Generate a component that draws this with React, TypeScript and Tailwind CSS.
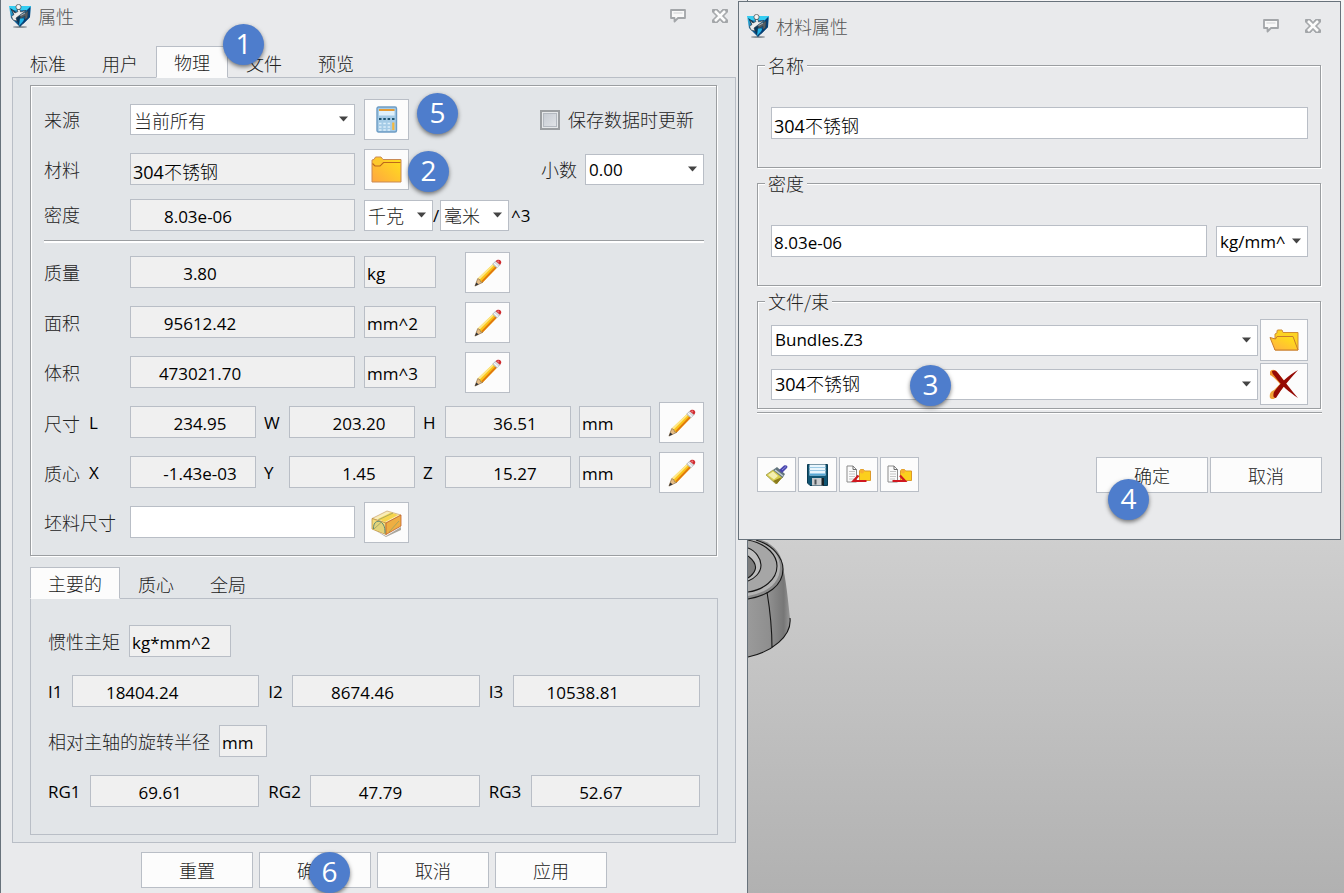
import { useId, useState } from "react";
import type { ReactNode } from "react";

const latin = "font-['Open_Sans','Noto_Sans_CJK_SC',sans-serif] text-[17px] leading-6 font-normal text-black";
const mixed = "font-['Open_Sans','Noto_Sans_CJK_SC_Light','Noto_Sans_CJK_SC',sans-serif] text-[18px] leading-6 font-normal text-black";
const cjk = "font-['Noto_Sans_CJK_SC',sans-serif] text-[18px] leading-6 font-light text-[#222]";
const etched = "border border-[#9b9ea1] shadow-[1px_1px_0_#fff,inset_1px_1px_0_#fff]";
const edge = "border border-[#b9bec6]";

function Logo() {
  return (
    <svg width="24" height="24" viewBox="0 0 24 24" aria-hidden="true">
      <defs>
        <linearGradient id="shield" x1="0" y1="0" x2="0.6" y2="1">
          <stop offset="0" stopColor="#48d8f6" />
          <stop offset="0.45" stopColor="#1673ad" />
          <stop offset="1" stopColor="#0a3f72" />
        </linearGradient>
      </defs>
      <ellipse cx="12" cy="23" rx="7" ry="1" fill="#8b9297" />
      <path d="M1 2 L23 2 L22 13 L12 23 L3 14 Z" fill="url(#shield)" />
      <path d="M1 2 L23 2 L21 6 L4 6 Z" fill="#35cdf2" />
      <path d="M2 4 L12 23 L13 14 L7 7 Z" fill="#0b3658" />
      <path d="M11 22 L12 14 L17 15 Z" fill="#21b5e8" />
      <path d="M22 3 L22 13 L15 20 L16 15 L20 11 L19 6 Z" fill="#063f75" />
      <circle cx="10.500" cy="3" r="2.600" fill="#f4f4f4" stroke="#3d4348" strokeWidth="0.7" />
      <path
        d="M4 6 L7 9 L10 7.500 L9 5.500 L12 5.500 L12.500 8 L18 6.500 L12 11 L8 14 L9 17 L5 16 L3.500 12.500 L6 10.500 Z"
        fill="#ededed"
        stroke="#31383e"
        strokeWidth="0.6"
      />
      <path d="M12 11.500 L20 7 L19.500 14 L17 15.500 L17 12 L12.500 14.500 Z" fill="#555d63" stroke="#2b3237" strokeWidth="0.4" />
      <path d="M12.500 11.500 L17 9" stroke="#c9cdd0" strokeWidth="0.8" />
    </svg>
  );
}

function SpeechIcon() {
  return (
    <svg width="18" height="16" viewBox="0 0 18 16" aria-hidden="true">
      <path d="M2 2 H16 V10 H9 L5.500 13.500 V10 H2 Z" fill="#f9f9f9" stroke="#a3a6a9" strokeWidth="1.800" strokeLinejoin="round" />
      <path d="M4.500 5 H13.500" stroke="#cfd1d3" />
    </svg>
  );
}

function CrossIcon() {
  return (
    <svg width="18" height="16" viewBox="0 0 18 16" aria-hidden="true">
      <path
        d="M1.500 1.500 H6.500 L9 4.500 L11.500 1.500 H16.500 V4 L12.500 8 L16.500 12 V14.500 H11.500 L9 11.500 L6.500 14.500 H1.500 V12 L5.500 8 L1.500 4 Z"
        fill="#a3a6a9"
        stroke="#a3a6a9"
        strokeLinejoin="round"
      />
      <path d="M4 3 L14 13 M14 3 L4 13" stroke="#fbfbfb" strokeWidth="2.600" />
    </svg>
  );
}

function PencilIcon() {
  return (
    <svg width="28" height="28" viewBox="0 0 30 30" aria-hidden="true">
      <path d="M4 21 L20 5.500 L24.500 9.500 L9.500 25 L7 24.500 L6.500 22.500 Z" fill="#fcc419" />
      <path d="M4 21 L20 5.500 L21.300 6.700 L6 22 Z" fill="#fde98d" />
      <path d="M9.500 25 L24.500 9.500 L22.800 8 L8 23.500 Z" fill="#e0790e" />
      <path d="M4 21 L6.300 22.200 L7 24.500 L9.500 25 L1 29 Z" fill="#e6bd86" stroke="#8c6a3c" strokeWidth="0.7" />
      <path d="M1 29 L2.500 25.200 L5 27.300 Z" fill="#30323a" />
      <path d="M20 5.500 L23.500 2 L28 6 L24.500 9.500 Z" fill="#d9dcdf" stroke="#9fa3a7" strokeWidth="0.7" />
      <path d="M21.500 4.500 L26 8.500" stroke="#fff" />
      <path d="M23.300 2.400 C24.500 0.600 27.500 0.500 28.600 1.800 C29.700 3.200 29.300 4.800 27.900 6.200 Z" fill="#cf2a2f" />
      <circle cx="26" cy="2.700" r="1.100" fill="#ee7375" />
    </svg>
  );
}

function CalculatorIcon() {
  return (
    <svg width="22" height="28" viewBox="0 0 22 28" aria-hidden="true">
      <rect x="1" y="1" width="19.500" height="25" rx="1.500" fill="#a5cbe6" stroke="#6d9cc4" strokeWidth="1.400" />
      <rect x="3" y="3" width="15.500" height="2" fill="#e59b33" />
      <rect x="3" y="5" width="15.500" height="4.500" fill="#dff1fb" />
      <path d="M3 13 h2.500 M7.300 13 h2.500 M11.600 13 h2.500 M16 13 h2.500" stroke="#1d5470" strokeWidth="2" />
      <path d="M3 17.500 h2.500 M7.300 17.500 h2.500 M11.600 17.500 h2.500 M3 21 h2.500 M7.300 21 h2.500 M11.600 21 h2.500 M3 24 h2.500 M7.300 24 h2.500 M11.600 24 h2.500" stroke="#dbeefa" strokeWidth="1.600" />
      <rect x="16.200" y="16.500" width="2.200" height="7.500" fill="#f5b73c" />
    </svg>
  );
}

function FolderIcon() {
  return (
    <svg width="32" height="28" viewBox="0 0 32 28" aria-hidden="true">
      <defs>
        <linearGradient id="folderFill" x1="0" y1="1" x2="1" y2="0">
          <stop offset="0" stopColor="#ffa640" />
          <stop offset="1" stopColor="#ffe31a" />
        </linearGradient>
      </defs>
      <path d="M1 4 L3 3.500 L4.500 1 H10 L12 3.500 H30 V26 H1 Z" fill="url(#folderFill)" stroke="#c98a55" />
      <path d="M1.500 7.500 L4 10 H9 L12.500 6.500 H29.500" fill="none" stroke="#bd6a1c" strokeWidth="1.200" />
      <path d="M5 2 H9.500 L11.500 4.500 V6 L9 9 H4.500 L2 6.500 V4.500 H4 Z" fill="#fdc92c" />
    </svg>
  );
}

function OpenFolderIcon() {
  return (
    <svg width="30" height="22" viewBox="0 0 30 22" aria-hidden="true">
      <defs>
        <linearGradient id="openFill" x1="0" y1="1" x2="1" y2="0">
          <stop offset="0" stopColor="#ffae45" />
          <stop offset="1" stopColor="#ffe70f" />
        </linearGradient>
      </defs>
      <path d="M6 20 V5 L8 4 V1.500 L9 1 H13 L14 3.500 H29 V21 H6 Z" fill="#fdd321" stroke="#cf8d35" />
      <path d="M1 8.500 L6.500 10 L8 7.500 H24 L29 21 H6 Z" fill="url(#openFill)" stroke="#c97d2a" />
    </svg>
  );
}

function DeleteIcon() {
  return (
    <svg width="30" height="30" viewBox="0 0 30 30" aria-hidden="true">
      <path d="M1 3 C2 0 6 0 8 3 L17 14 L13 17 C8 12 4 7 1 6 Z" fill="#f0932b" />
      <path d="M1 29 C0 25 2 22 5 21 L12 14 L15 17 L6 29 C4 31 2 30 1 29 Z" fill="#f0a437" />
      <path d="M3 2 C5 1 7 1 9 4 C16 13 23 22 29 29 C20 23 12 16 7 9 C5 6 3 5 3 2 Z" fill="#960b05" />
      <path d="M29 1 C20 11 13 19 7 29 C4 29 4 26 5 23 C11 14 20 6 29 1 Z" fill="#960b05" />
    </svg>
  );
}

function StockIcon() {
  return (
    <svg width="32" height="28" viewBox="0 0 32 28" aria-hidden="true">
      <path d="M2 20 L15 27 L30 18 V21 L15 28 Z" fill="#aaa79f" />
      <path d="M1 9.500 L16 2 L30 6 L15 14 Z" fill="#f9edb8" stroke="#c9a06b" strokeWidth="0.7" />
      <path d="M1 9.500 L15 14 V25.500 L1 20 Z" fill="#f4dc7c" stroke="#b9862f" strokeWidth="0.7" />
      <path d="M15 14 L30 6 V17 L15 25.500 Z" fill="#eeae42" stroke="#c0602d" strokeWidth="0.8" />
      <path d="M7 10 L20 3.500 L27 6 L14 13 Z" fill="#f6d54e" />
      <path d="M2.500 20 C2 12 8 10 12 15 C14 18 14 21 14 24.500" fill="#e2d47a" stroke="#5f8a78" strokeWidth="1" />
      <path d="M3 20 L10 13.500 M7 11 L22 4 M18 23 L28 12" stroke="#98a062" strokeWidth="0.8" />
    </svg>
  );
}

function BrushIcon() {
  return (
    <svg width="24" height="22" viewBox="0 0 24 22" aria-hidden="true">
      <path d="M1 11 L8 6 L18 13 L11 20 Z" fill="#d6cc4d" stroke="#9d9a4c" strokeWidth="0.8" />
      <path d="M3 11 L8 7.500 L13 12 L9 15.500 Z" fill="#f4efb0" />
      <path d="M8 17 L17 13 L12 20 Z" fill="#8a7a1c" />
      <path d="M8 6 L12 3 L20 10 L17.500 14 Z" fill="#62747c" />
      <path d="M10 6 L18 12" stroke="#c3cfd4" strokeWidth="1.500" />
      <path d="M14 6 L19 1.500 C21 0.500 23.500 2 22 4 L17 9 Z" fill="#4a47ad" />
      <path d="M17 6 L21 2.500" stroke="#8c8ade" />
    </svg>
  );
}

function SaveIcon() {
  return (
    <svg width="21" height="22" viewBox="0 0 21 22" aria-hidden="true">
      <path d="M0.500 0.500 H20.500 V21.500 H3 L0.500 19 Z" fill="#115573" stroke="#0a3a52" />
      <rect x="2.500" y="0.500" width="16" height="11" fill="#e9f6fd" />
      <path d="M2.500 3.500 H18.500 M2.500 6.500 H18.500" stroke="#9ccbe6" />
      <path d="M2.500 10.500 H18.500" stroke="#58a9d6" strokeWidth="2" />
      <rect x="5" y="14" width="11" height="7.500" fill="#c9cbcd" />
      <rect x="7.500" y="15.500" width="2" height="5" fill="#4c5358" />
      <rect x="14.500" y="14" width="2.500" height="7.500" fill="#1b2226" />
    </svg>
  );
}

function TransferIcon({ toFolder }: { toFolder: boolean }) {
  return (
    <svg width="26" height="20" viewBox="0 0 26 20" aria-hidden="true">
      <path d="M1 1 H7 L10.500 4.500 V17 H1 Z" fill="#fafafa" stroke="#8b8b8b" />
      <path d="M7 1 V4.500 H10.500" fill="none" stroke="#6d6d6d" />
      <path d="M3 6.500 H9 M3 9 H9 M3 11.500 H9 M3 14 H8" stroke="#c6c6c6" />
      <path d="M13.500 6 L14.500 4.500 H17.500 L18.500 6 H24.500 V15.500 H13.500 Z" fill="#fbcf1d" stroke="#dc9a2a" />
      <circle cx="16" cy="6.500" r="2" fill="#f8ae33" />
      {toFolder ? (
        <path d="M5.500 16 H18 L13 10.500" fill="none" stroke="#d01820" strokeWidth="2.200" />
      ) : (
        <path d="M20.500 16 H7.500 L12.500 10.500" fill="none" stroke="#d01820" strokeWidth="2.200" />
      )}
    </svg>
  );
}

function Badge({ n, place }: { n: number; place: string }) {
  return (
    <span
      className={`pointer-events-none absolute z-20 flex size-[41px] items-center justify-center rounded-full bg-[#4e7dcc] pb-[3px] font-['Open_Sans',sans-serif] text-[28px] leading-8 text-white shadow-[0_2px_4px_rgba(0,0,0,0.5)] ${place}`}
    >
      {n}
    </span>
  );
}

function TitleBar({ title, className }: { title: string; className: string }) {
  return (
    <header className={`flex items-start pl-[7px] ${className}`}>
      <Logo />
      <h1 className={`ml-[6px] ${cjk} !text-[#555]`}>{title}</h1>
      <div className="ml-auto flex h-6 items-center gap-6">
        <button type="button" aria-label="反馈"><SpeechIcon /></button>
        <button type="button" aria-label="关闭"><CrossIcon /></button>
      </div>
    </header>
  );
}

function Field({ label, value, className, readOnly = true }: { label: string; value: string; className: string; readOnly?: boolean }) {
  return (
    <input
      aria-label={label}
      defaultValue={value}
      readOnly={readOnly}
      className={`h-8 min-w-0 rounded-none pt-[3px] outline-none ${edge} ${readOnly ? "bg-[#f0f0f0]" : "bg-white"} ${className}`}
    />
  );
}

function Choice({ label, options, className, text = cjk, id }: { label: string; options: string[]; className: string; text?: string; id?: string }) {
  return (
    <span className={`relative flex h-[31px] ${className}`}>
      <select id={id} aria-label={label} className={`w-full appearance-none rounded-none bg-white pr-[22px] pl-[3px] outline-none ${edge} ${text}`}>
        {options.map((o) => (
          <option key={o}>{o}</option>
        ))}
      </select>
      <svg className="pointer-events-none absolute top-3 right-[7px]" width="9" height="6" viewBox="0 0 9 6" aria-hidden="true">
        <path d="M0 0.500 H9 L4.500 5.500 Z" fill="#444" />
      </svg>
    </span>
  );
}

function IconButton({ label, children, size = "h-[41px] w-[45px]" }: { label: string; children: ReactNode; size?: string }) {
  return (
    <button type="button" aria-label={label} className={`flex shrink-0 items-center justify-center bg-[#fcfcfc] ${edge} ${size}`}>
      {children}
    </button>
  );
}

function TextButton({ children }: { children: ReactNode }) {
  return (
    <button type="button" className={`h-9 w-28 shrink-0 bg-[#fcfcfc] ${edge} ${cjk}`}>
      {children}
    </button>
  );
}

function Tabs({ items, initial }: { items: string[]; initial: number }) {
  const [active, setActive] = useState(initial);
  return (
    <div role="tablist" className="relative z-10 -mb-px flex">
      {items.map((t, i) => (
        <button
          key={t}
          type="button"
          role="tab"
          aria-selected={i === active}
          onClick={() => setActive(i)}
          className={`h-8 border px-[17px] ${cjk} ${
            i === active ? "border-[#b9bec6] border-b-[#fcfcfc] bg-[#fcfcfc]" : "border-transparent pt-[2px]"
          }`}
        >
          {t}
        </button>
      ))}
    </div>
  );
}

function RowLabel({ children }: { children: ReactNode }) {
  return <span className={`w-[86px] shrink-0 pb-[2px] ${cjk}`}>{children}</span>;
}

const measures = [
  { name: "质量", value: "3.80", unit: "kg" },
  { name: "面积", value: "95612.42", unit: "mm^2" },
  { name: "体积", value: "473021.70", unit: "mm^3" },
];

const vectors = [
  { name: "尺寸", parts: [["L", "234.95"], ["W", "203.20"], ["H", "36.51"]] },
  { name: "质心", parts: [["X", "-1.43e-03"], ["Y", "1.45"], ["Z", "15.27"]] },
];

function Triple({ items, labelWidth, pad }: { items: string[][]; labelWidth: string; pad: string }) {
  return (
    <div className="grid grid-cols-3 gap-[9px]">
      {items.map(([k, v]) => (
        <label key={k} className={`flex items-center ${latin}`}>
          <span className={`shrink-0 pt-[2px] ${labelWidth}`}>{k}</span>
          <Field label={k} value={v} className={`flex-1 text-center ${pad} ${latin}`} />
        </label>
      ))}
    </div>
  );
}

function PhysicalGroup() {
  const id = useId();
  return (
    <section className={`mr-px flex flex-col gap-[9px] pt-[13px] pr-3 pb-3 pl-[13px] ${etched}`}>
      <div className="flex h-[41px] items-center">
        <RowLabel>来源</RowLabel>
        <Choice label="来源" options={["当前所有"]} className="w-[225px]" />
        <span className="relative ml-[9px]">
          <IconButton label="计算"><CalculatorIcon /></IconButton>
          <Badge n={5} place="-top-[6px] left-[53px]" />
        </span>
        <div className="ml-auto flex w-[164px] items-center gap-2">
          <input
            id={id + "upd"}
            type="checkbox"
            className="size-5 shrink-0 appearance-none border-2 border-[#9b9ea1] bg-gradient-to-br from-[#c3c8d0] to-[#e4e6e9] shadow-[inset_0_0_0_1px_#e6e8ea,inset_0_0_0_2px_#b4b9c0]"
          />
          <label htmlFor={id + "upd"} className={`pb-[2px] whitespace-nowrap ${cjk}`}>保存数据时更新</label>
        </div>
      </div>

      <div className="flex h-[41px] items-center">
        <RowLabel>材料</RowLabel>
        <Field label="材料" value="304不锈钢" className={`mb-px w-[225px] pl-[2px] ${mixed}`} />
        <span className="relative ml-[9px]">
          <IconButton label="选择材料"><FolderIcon /></IconButton>
          <Badge n={2} place="top-[2px] left-11" />
        </span>
        <label htmlFor={id + "dec"} className={`mr-2 ml-auto pb-[2px] ${cjk}`}>小数</label>
        <Choice id={id + "dec"} label="小数" options={["0.00"]} className="w-[119px]" text={latin} />
      </div>

      <div className="flex h-8 items-center">
        <RowLabel>密度</RowLabel>
        <Field label="密度" value="8.03e-06" className={`mr-[9px] w-[225px] pr-[89px] text-center ${latin}`} />
        <Choice label="质量单位" options={["千克"]} className="w-[69px]" />
        <span className={`w-[7px] pt-[2px] ${latin}`}>/</span>
        <Choice label="长度单位" options={["毫米"]} className="w-[69px]" />
        <span className={`ml-[2px] pt-[2px] ${latin}`}>^3</span>
      </div>

      <hr className="h-[3px] border-t border-b-2 border-t-[#9b9ea1] border-b-white" />

      {measures.map((m) => (
        <div key={m.name} className="flex h-[41px] items-center">
          <RowLabel>{m.name}</RowLabel>
          <Field label={m.name} value={m.value} className={`mb-px w-[225px] pr-[85px] text-center ${latin}`} />
          <Field label={m.name + "单位"} value={m.unit} className={`mr-[29px] mb-px ml-[9px] w-[72px] pl-[2px] ${latin}`} />
          <IconButton label={"编辑" + m.name}><PencilIcon /></IconButton>
        </div>
      ))}

      {vectors.map((v) => (
        <div key={v.name} className="flex h-[41px] items-center gap-2">
          {v.parts.map(([axis, value], i) => (
            <label key={axis} className={`flex flex-auto items-center ${i > 0 ? "gap-2" : ""}`}>
              {i === 0 ? (
                <span className={`flex w-[86px] shrink-0 gap-[9px] ${cjk}`}>
                  {v.name}
                  <span className={latin}>{axis}</span>
                </span>
              ) : (
                <span className={`shrink-0 ${i === 1 ? "w-[17px]" : "w-[14px]"} ${latin}`}>{axis}</span>
              )}
              <Field label={v.name + axis} value={value} className={`mb-px w-[126px] flex-auto pl-[14px] text-center ${latin}`} />
            </label>
          ))}
          <Field label={v.name + "单位"} value="mm" className={`mb-px w-[72px] pl-[2px] ${latin}`} />
          <IconButton label={"编辑" + v.name}><PencilIcon /></IconButton>
        </div>
      ))}

      <div className="flex h-[41px] items-center">
        <RowLabel>坯料尺寸</RowLabel>
        <Field label="坯料尺寸" value="" readOnly={false} className={`mr-[9px] mb-px w-[225px] pl-[2px] ${latin}`} />
        <IconButton label="坯料"><StockIcon /></IconButton>
      </div>
    </section>
  );
}

function PropertiesDialog() {
  return (
    <section className="relative flex min-h-screen w-full max-w-[748px] flex-col border-x border-[#68727b] bg-[#e9eaec]">
      <TitleBar title="属性" className="h-[46px] pt-1 pr-[18px]" />
      <div className="relative mx-[11px]">
        <Tabs items={["标准", "用户", "物理", "文件", "预览"]} initial={2} />
        <Badge n={1} place="-top-[22px] left-[211px]" />
        <div className={`bg-[#e2e5e8] px-[17px] py-[7px] ${edge}`}>
          <PhysicalGroup />
          <div className="mt-[11px]">
            <Tabs items={["主要的", "质心", "全局"]} initial={0} />
            <div className={`flex flex-col gap-[18px] px-[17px] pt-[26px] pb-[27px] ${edge}`}>
              <label className={`flex items-center gap-[9px] ${cjk}`}>
                惯性主矩
                <Field label="惯性主矩" value="kg*mm^2" className={`w-[102px] pl-[2px] ${latin}`} />
              </label>
              <Triple items={[["I1", "18404.24"], ["I2", "8674.46"], ["I3", "10538.81"]]} labelWidth="w-6" pad="pr-[47px]" />
              <label className={`flex items-center gap-[9px] ${cjk}`}>
                相对主轴的旋转半径
                <Field label="相对主轴的旋转半径" value="mm" className={`w-12 pl-[2px] ${latin}`} />
              </label>
              <Triple items={[["RG1", "69.61"], ["RG2", "47.79"], ["RG3", "52.67"]]} labelWidth="w-[42px]" pad="pr-[29px]" />
            </div>
          </div>
        </div>
      </div>
      <footer className="flex justify-center gap-[6px] pt-[9px] pb-[5px]">
        <TextButton>重置</TextButton>
        <span className="relative">
          <TextButton>确定</TextButton>
          <Badge n={6} place="top-0 left-[50px]" />
        </span>
        <TextButton>取消</TextButton>
        <TextButton>应用</TextButton>
      </footer>
    </section>
  );
}

function Frame({ title, children, className }: { title: string; children: ReactNode; className: string }) {
  return (
    <fieldset className={`mr-px min-w-0 pr-3 pl-[13px] ${etched} ${className}`}>
      <legend className={`-ml-[6px] h-[22px] bg-[#e9eaec] px-[3px] ${cjk} !leading-[22px]`}>{title}</legend>
      {children}
    </fieldset>
  );
}

function MaterialDialog() {
  return (
    <section className="absolute top-px right-[3px] left-[738px] z-30 border border-[#68727b] bg-[#e9eaec] pb-[46px]">
      <TitleBar title="材料属性" className="h-[52px] pt-3 pr-[18px]" />
      <div className="mx-[18px] flex flex-col gap-1">
        <Frame title="名称" className="pt-[31px] pb-7">
          <Field label="名称" value="304不锈钢" readOnly={false} className={`block w-full pl-[2px] ${mixed}`} />
        </Frame>
        <Frame title="密度" className="pt-[31px] pb-7">
          <div className="flex items-end gap-[9px]">
            <Field label="密度" value="8.03e-06" readOnly={false} className={`flex-1 pl-[2px] ${latin}`} />
            <Choice label="密度单位" options={["kg/mm^3"]} className="w-[92px]" text={latin} />
          </div>
        </Frame>
        <Frame title="文件/束" className="pt-[7px] pb-[3px]">
          <div className="flex flex-col gap-[2px]">
            <div className="flex items-center gap-[2px]">
              <Choice label="文件" options={["Bundles.Z3"]} className="flex-1" text={latin} />
              <IconButton label="打开文件" size="h-[42px] w-12"><OpenFolderIcon /></IconButton>
            </div>
            <div className="flex items-center gap-[2px]">
              <span className="relative flex flex-1">
                <Choice label="材料" options={["304不锈钢"]} className="flex-1" text={mixed} />
                <Badge n={3} place="-top-1 left-[139px]" />
              </span>
              <IconButton label="删除材料" size="h-[42px] w-12"><DeleteIcon /></IconButton>
            </div>
          </div>
        </Frame>
      </div>
      <hr className="mx-[18px] mt-[3px] border-t border-b border-t-[#9b9ea1] border-b-white" />
      <footer className="mx-[18px] flex items-start gap-[2px] pt-[43px]">
        <IconButton label="清除" size="h-[35px] w-[39px]"><BrushIcon /></IconButton>
        <IconButton label="保存" size="h-[35px] w-[39px]"><SaveIcon /></IconButton>
        <IconButton label="从文件夹读取" size="h-[35px] w-[39px]"><TransferIcon toFolder={false} /></IconButton>
        <IconButton label="写入文件夹" size="h-[35px] w-[39px]"><TransferIcon toFolder /></IconButton>
        <span className="relative ml-auto">
          <TextButton>确定</TextButton>
          <Badge n={4} place="top-[22px] left-[12px]" />
        </span>
        <TextButton>取消</TextButton>
      </footer>
    </section>
  );
}

function Part() {
  return (
    <svg className="absolute top-[530px] left-[748px]" width="48" height="130" viewBox="0 0 48 130" aria-hidden="true">
      <defs>
        <linearGradient id="side" x1="0" y1="0" x2="1" y2="0">
          <stop offset="0" stopColor="#9a9a9a" />
          <stop offset="0.500" stopColor="#8f8f8f" />
          <stop offset="0.850" stopColor="#777" />
          <stop offset="1" stopColor="#999" />
        </linearGradient>
      </defs>
      <path d="M0 60 L34 34 C38 48 40 70 42 88 C44 106 24 122 0 127 Z" fill="url(#side)" />
      <path d="M0 8 C22 8 35 23 35 38 C35 55 19 66 0 69 Z" fill="#8a8a8a" />
      <path d="M0 9 C19 9 32 23 32 37 C32 54 18 63 0 66 Z" fill="#b4b4b4" />
      <path d="M0 10 C18 10 29 24 29 36 C29 50 15 60 0 62 Z" fill="#a6a6a6" />
      <path d="M0 18 C8 20 13 28 13 34 C13 43 6 49 0 51 Z" fill="#bdbdbd" />
      <path d="M0 27 C5 30 9 35 7 40 C6 43 3 46 0 48 Z" fill="#7e7e7e" />
      <path
        d="M8 10 C25 15 35 28 35 39 C35 56 19 66 0 69 M0 10 C20 14 29 26 29 36 C29 50 15 60 0 62 M0 18 C8 21 13 29 13 35 C13 43 6 49 0 51 M0 26 C5 30 9 35 7 40 C6 43 3 46 0 48 M19 62 C22 80 24 98 24 118 M42 88 C44 106 24 122 0 127"
        fill="none"
        stroke="#161616"
        strokeWidth="1.100"
      />
    </svg>
  );
}

export default function App() {
  return (
    <main className="relative min-h-screen overflow-hidden bg-gradient-to-b from-[#f6f6f6] via-[#cfcfcf] via-60% to-[#b1b1b1]">
      <Part />
      <PropertiesDialog />
      <MaterialDialog />
    </main>
  );
}
